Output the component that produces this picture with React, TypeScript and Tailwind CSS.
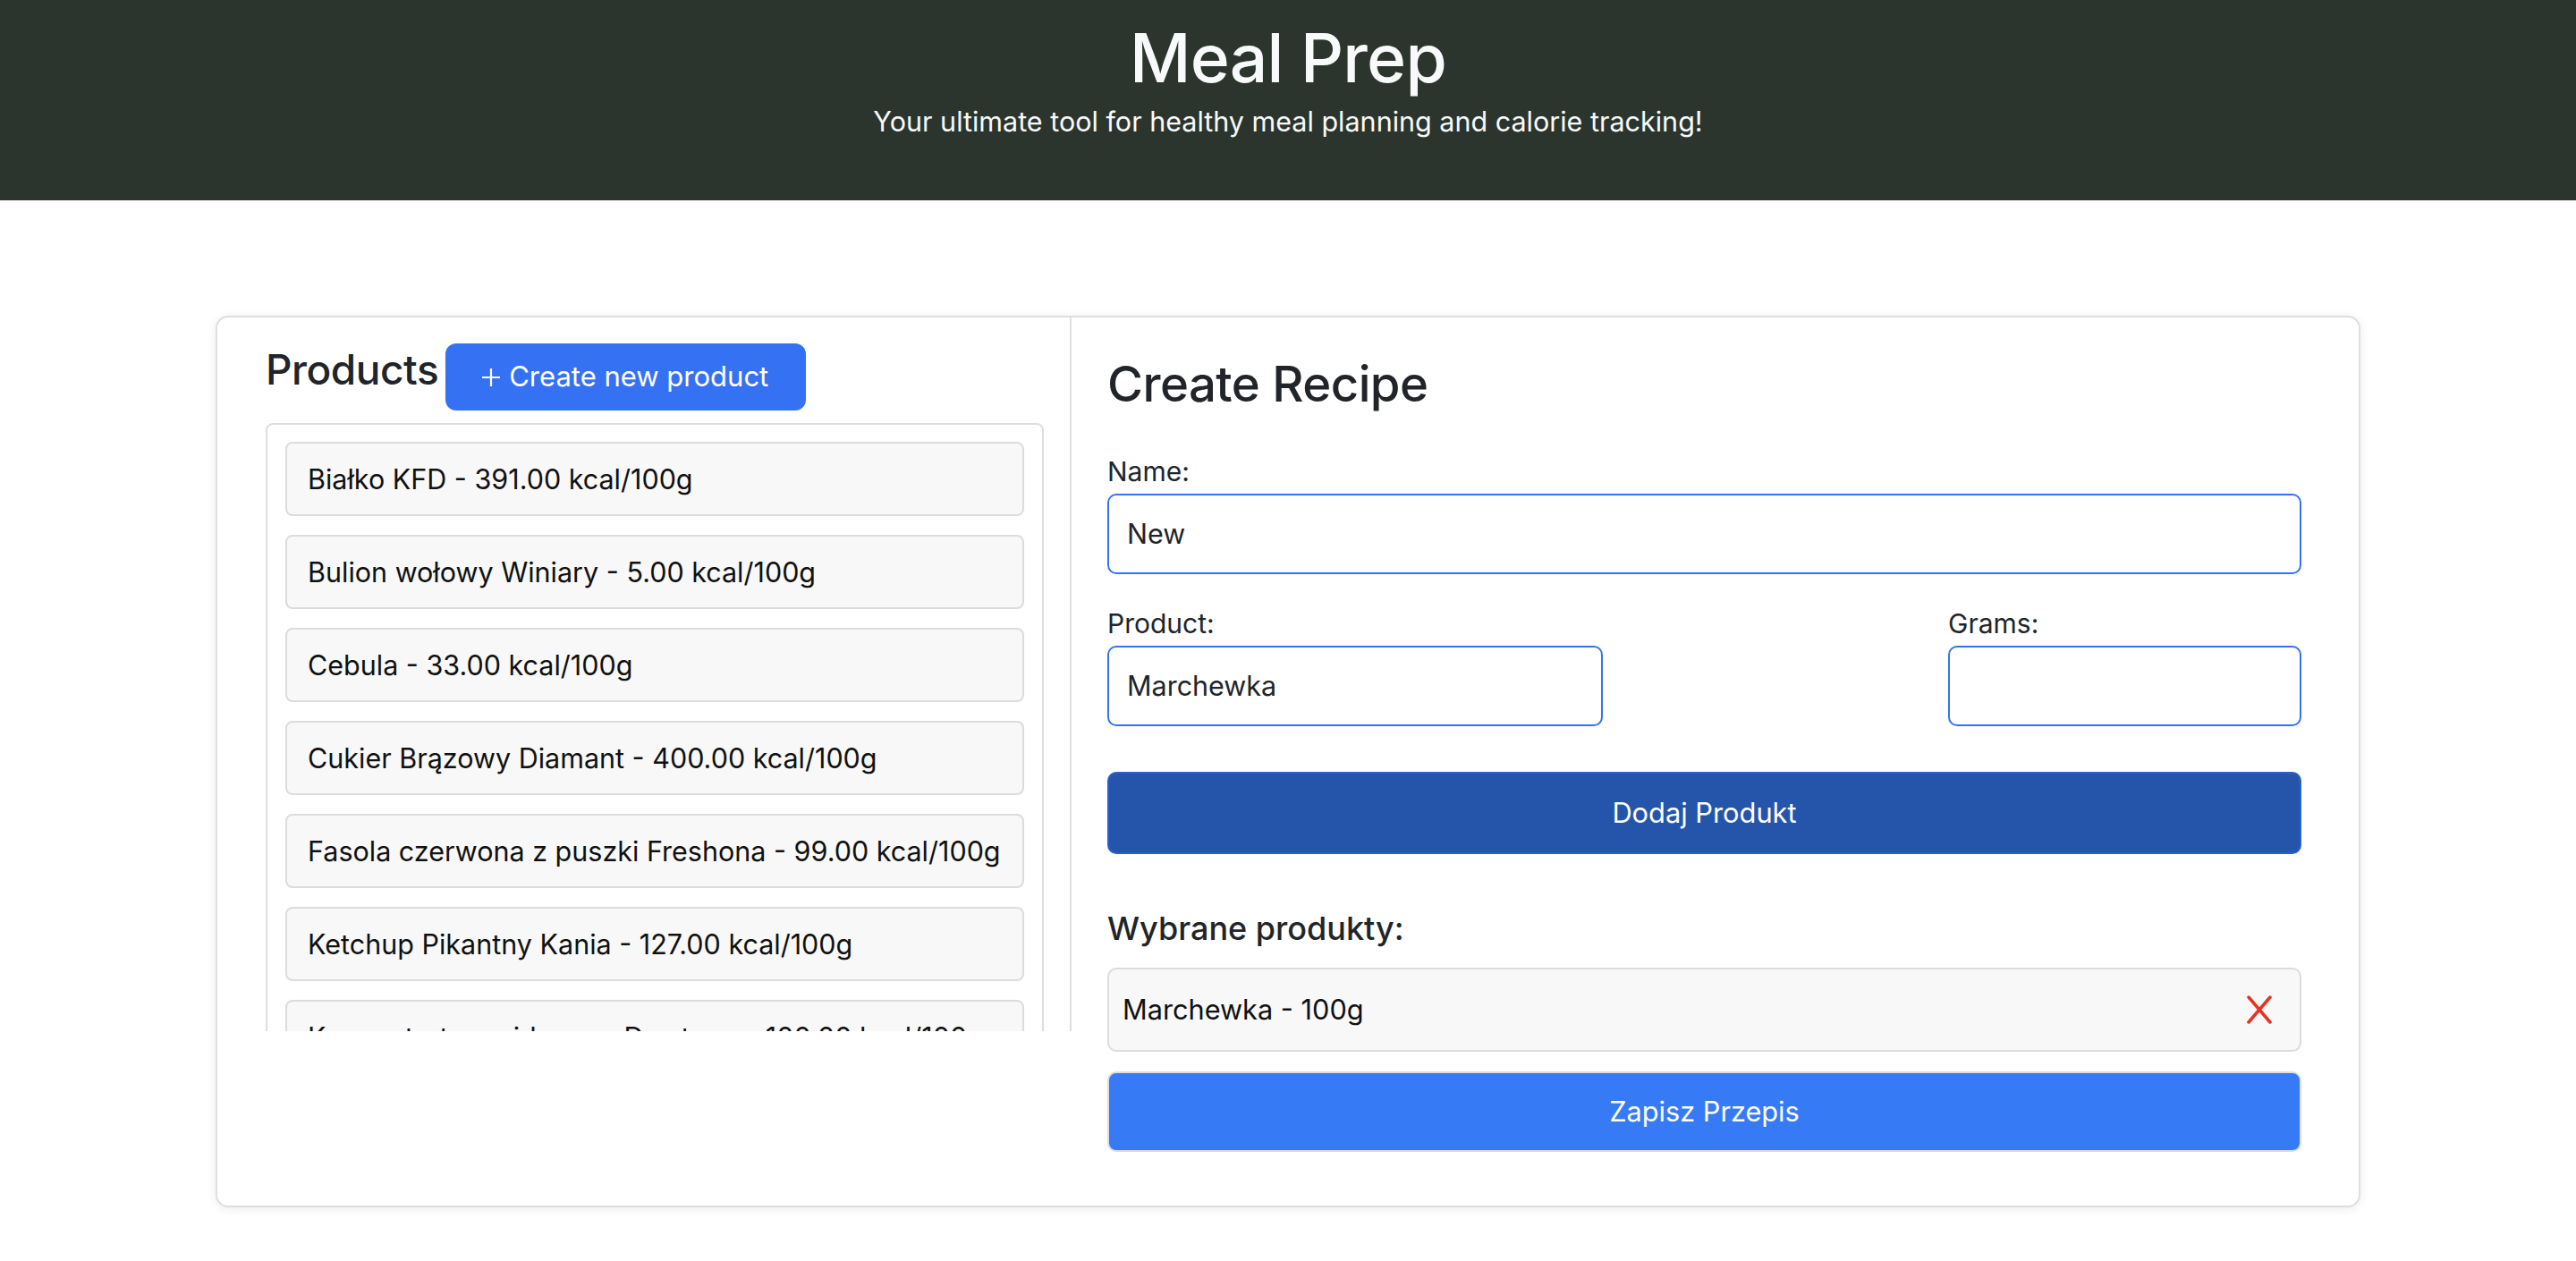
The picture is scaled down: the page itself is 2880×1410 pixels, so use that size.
const products = [
  "Białko KFD - 391.00 kcal/100g",
  "Bulion wołowy Winiary - 5.00 kcal/100g",
  "Cebula - 33.00 kcal/100g",
  "Cukier Brązowy Diamant - 400.00 kcal/100g",
  "Fasola czerwona z puszki Freshona - 99.00 kcal/100g",
  "Ketchup Pikantny Kania - 127.00 kcal/100g",
  "Koncentrat pomidorowy Dawtona - 100.00 kcal/100g",
];

const App = () => {
  return (
    <div className="min-h-screen bg-white font-['Inter',sans-serif] text-[#212529]">
      {/* Header */}
      <header className="h-[224px] bg-[#2b352d] pt-[19px] text-center text-[#f8f9fa]">
        <h1 className="text-[75px] font-medium leading-[92px] tracking-[-0.01em]">Meal Prep</h1>
        <p className="mt-[7px] text-[30.5px] leading-[36px]">
          Your ultimate tool for healthy meal planning and calorie tracking!
        </p>
      </header>

      <main className="px-[241px] pt-[129px] pb-[60px]">
        <div className="flex h-[997px] rounded-[14px] border-2 border-[#dedede] bg-white shadow-[0_2px_12px_rgba(0,0,0,0.08)]">
          {/* Products list */}
          <section className="h-[798px] w-[955px] shrink-0 overflow-hidden border-r-2 border-[#dedede] pt-[29px] pl-[54px] pr-[29px]">
            <div className="flex items-start">
              <h3 className="text-[46px] font-medium leading-[58px] tracking-[-0.01em]">Products</h3>
              <button
                type="button"
                className="ml-[8px] flex h-[75px] items-center gap-[9px] rounded-[12px] bg-[#3572f3] pl-[40px] pr-[42px] text-[31px] text-white"
              >
                <svg width="22" height="22" viewBox="0 0 22 22" fill="none" stroke="currentColor" strokeWidth="2.2">
                  <path d="M11 1v20M1 11h20" />
                </svg>
                Create new product
              </button>
            </div>

            <div className="mt-[14px] flex flex-col gap-[21px] rounded-[8px] border-2 border-[#dedede] px-[20px] pt-[19px] pb-[20px]">
              {products.map((p) => (
                <div
                  key={p}
                  className="flex h-[83px] shrink-0 items-center rounded-[8px] border-2 border-[#dcdcdc] bg-[#f8f8f8] pl-[23px] text-[30.5px] text-[#111]"
                >
                  {p}
                </div>
              ))}
            </div>
          </section>

          {/* Create recipe form */}
          <section className="flex-1 pt-[40px] pl-[40px] pr-[64px]">
            <h2 className="text-[54.5px] font-medium leading-[68px] tracking-[-0.01em]">Create Recipe</h2>

            <label className="mt-[47px] block text-[30px] leading-[35px]">Name:</label>
            <div className="mt-[7px] flex h-[90px] items-center rounded-[10px] border-2 border-[#3572f3] pl-[20px] text-[30.5px]">
              New
            </div>

            <div className="mt-[38px] flex justify-between">
              <div className="w-[554px]">
                <label className="block text-[30px] leading-[35px]">Product:</label>
                <div className="mt-[7px] flex h-[90px] items-center rounded-[10px] border-2 border-[#3572f3] pl-[20px] text-[30.5px]">
                  Marchewka
                </div>
              </div>
              <div className="w-[395px]">
                <label className="block text-[30px] leading-[35px]">Grams:</label>
                <div className="mt-[7px] h-[90px] rounded-[10px] border-2 border-[#3572f3]" />
              </div>
            </div>

            <button
              type="button"
              className="mt-[51px] flex h-[92px] w-full items-center justify-center rounded-[10px] border-2 border-[#2b5fcf] bg-[#2455aa] text-[30.8px] text-white"
            >
              Dodaj Produkt
            </button>

            <h5 className="mt-[61px] text-[36px] font-medium leading-[45px]">Wybrane produkty:</h5>

            <div className="mt-[21px] flex h-[94px] items-center justify-between rounded-[10px] border-2 border-[#dcdcdc] bg-[#f8f8f8] pl-[15px] pr-[31px] text-[30.7px] text-[#111]">
              <span>Marchewka - 100g</span>
              <svg width="28" height="32" viewBox="0 0 28 32" fill="none" stroke="#e5331f" strokeWidth="3.5" strokeLinecap="round">
                <path d="M2 2L26 30M26 2L2 30" />
              </svg>
            </div>

            <button
              type="button"
              className="mt-[22px] flex h-[90px] w-full items-center justify-center rounded-[10px] border-2 border-[#dcdcdc] bg-[#367af6] text-[30.7px] text-white"
            >
              Zapisz Przepis
            </button>
          </section>
        </div>
      </main>
    </div>
  );
};

export default App;
